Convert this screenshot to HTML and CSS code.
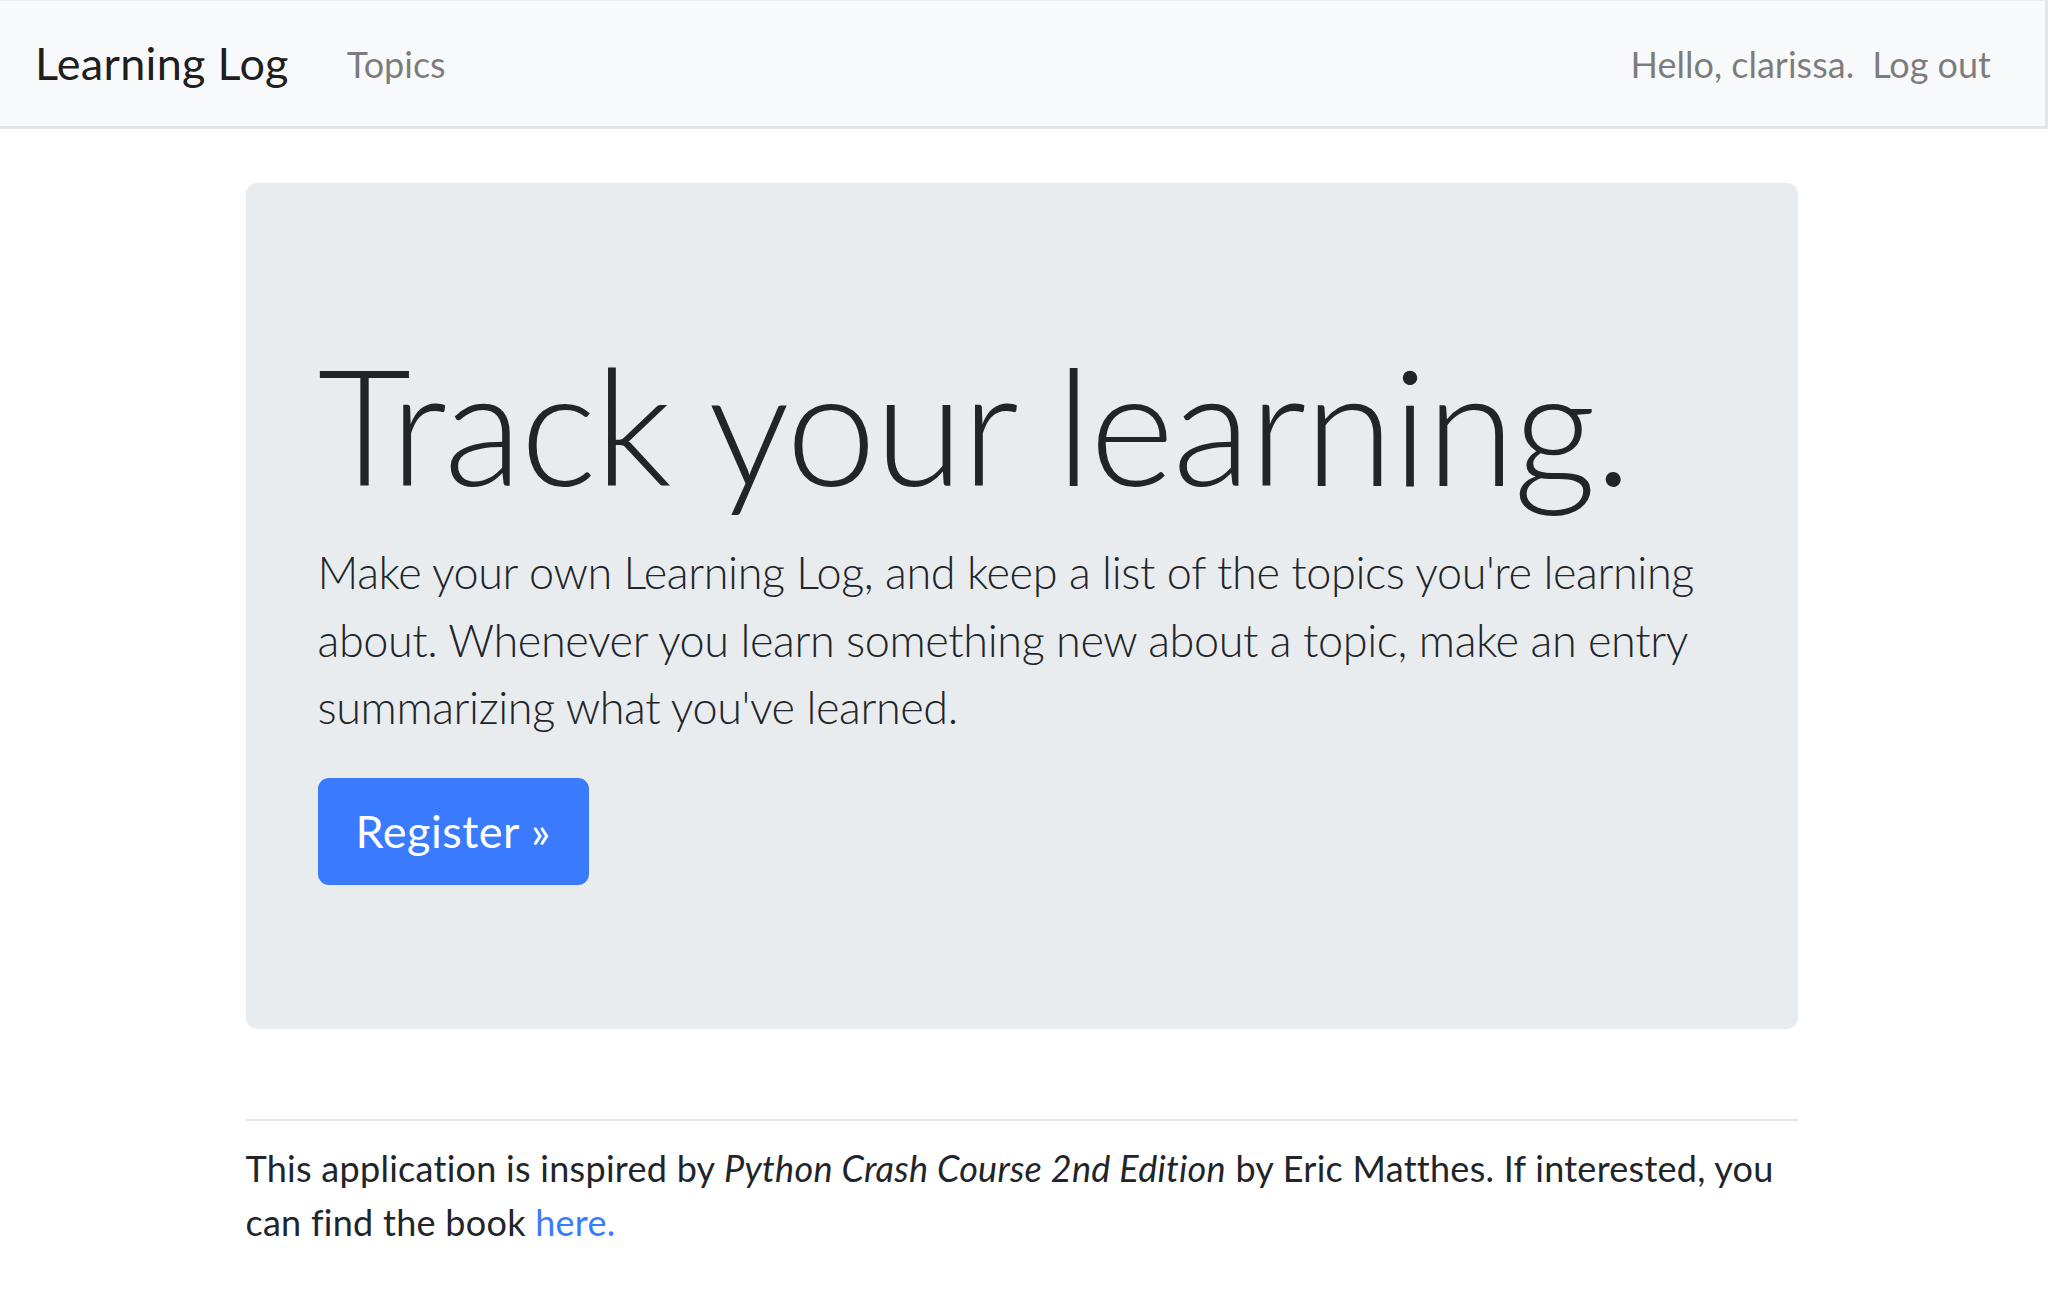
FILE: index.html
```html
<!DOCTYPE html>
<html lang="en">
<head>
<meta charset="utf-8">
<title>Learning Log</title>
<link rel="stylesheet" href="styles.css">
</head>
<body>
<nav class="navbar">
  <div class="nav-left">
    <a class="brand" href="#">Learning Log</a>
    <a class="nav-link" href="#">Topics</a>
  </div>
  <div class="nav-right">
    <span class="nav-text">Hello, clarissa.</span>
    <a class="nav-link" href="#">Log out</a>
  </div>
</nav>
<div class="page">
  <main class="container">
    <section class="jumbotron">
      <h1 class="display">Track your learning.</h1>
      <p class="lead">Make your own Learning Log, and keep a list of the topics you're learning about. Whenever you learn something new about a topic, make an entry summarizing what you've learned.</p>
      <a class="btn" href="#">Register &raquo;</a>
    </section>
    <hr class="rule">
    <p class="footer-text">This application is inspired by <em>Python Crash Course 2nd Edition</em> by Eric Matthes. If interested, you can find the book <a class="link" href="#">here.</a></p>
  </main>
</div>
</body>
</html>
```
FILE: styles.css
```css
html, body {
  margin: 0;
  padding: 0;
}
body {
  font-family: "Lato", "Open Sans", sans-serif;
  font-size: 36px;
  line-height: 54px;
  color: #212529;
  background: #fff;
}
a { text-decoration: none; }

.navbar {
  display: flex;
  justify-content: space-between;
  align-items: center;
  height: 125px;
  padding: 0 36px 0 35px;
  background: #f8f9fa;
  border-top: 1px solid #eceef0;
  border-right: 3px solid #e3e5e8;
  border-bottom: 3px solid #e3e5e8;
}
.nav-left, .nav-right {
  display: flex;
  align-items: center;
}
.brand {
  font-size: 45px;
  line-height: 67px;
  color: rgba(0,0,0,.9);
  margin-right: 36px;
  letter-spacing: 0.3px;
}
.nav-link {
  padding: 0 18px;
  color: rgba(0,0,0,.5);
}
.nav-left .nav-link {
  padding-left: 22px;
}
.nav-text {
  color: rgba(0,0,0,.5);
}

.page {
  padding-right: 5px;
}
.container {
  width: 1552px;
  margin: 0 auto;
  padding-top: 54px;
}
.jumbotron {
  background: #e9ecef;
  border-radius: 11px;
  padding: 144px 72px;
}
.display {
  margin: 0 0 18px;
  font-size: 162px;
  line-height: 194px;
  font-weight: 300;
  letter-spacing: -1.8px;
}
.lead {
  margin: 0 0 36px;
  font-size: 45px;
  line-height: 67.5px;
  font-weight: 300;
  letter-spacing: -0.4px;
}
.btn {
  display: inline-block;
  background: #3a7bfd;
  color: #fff;
  font-size: 45px;
  line-height: 67.5px;
  padding: 18px 36px;
  border: 2px solid #3a7bfd;
  border-radius: 11px;
  letter-spacing: 0.5px;
}
.rule {
  margin: 90px 0 20px;
  border: 0;
  border-top: 2px solid #e3e5e8;
}
.footer-text {
  margin: 0;
  letter-spacing: 0.27px;
}
.link { color: #3a7bfd; }
```
